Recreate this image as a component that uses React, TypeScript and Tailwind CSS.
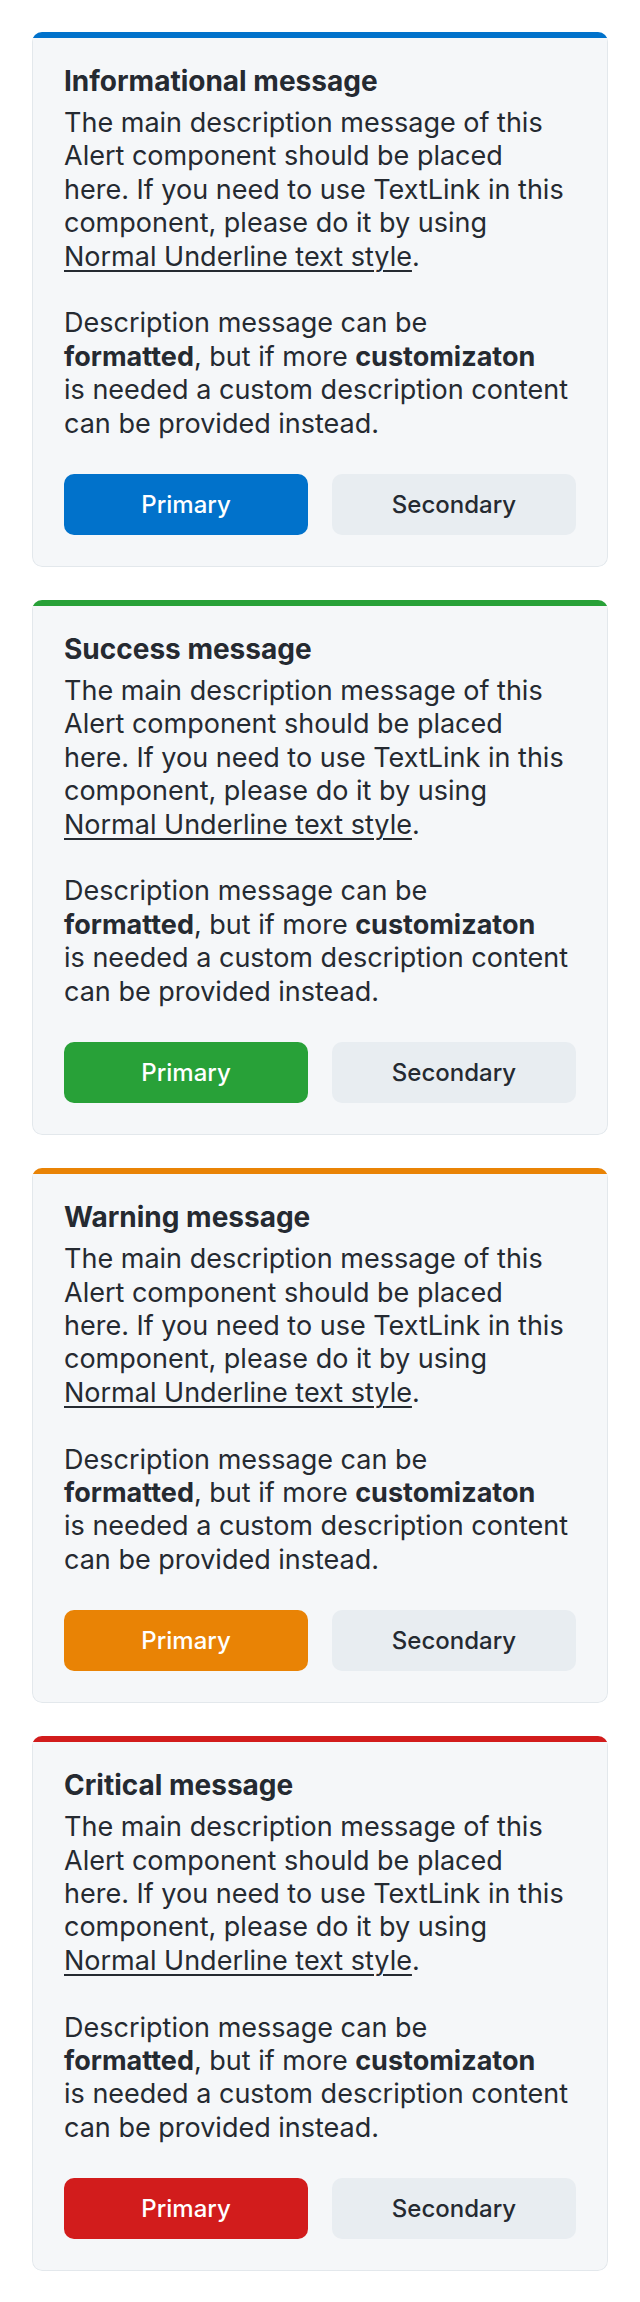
const alerts = [
  { title: "Informational message", stripe: "bg-[#0172cb]", button: "bg-[#0172cb]" },
  { title: "Success message", stripe: "bg-[#28a138]", button: "bg-[#28a138]" },
  { title: "Warning message", stripe: "bg-[#e98305]", button: "bg-[#e98305]" },
  { title: "Critical message", stripe: "bg-[#d21c1c]", button: "bg-[#d21c1c]" },
];

function Alert({ title, stripe, button }: { title: string; stripe: string; button: string }) {
  return (
    <section className="overflow-hidden rounded-[10px] bg-[#f5f7f9]">
      <div className={`h-[6px] ${stripe}`} />
      <div className="rounded-b-[10px] border-x border-b border-[#e3e8ec] px-[31px] pb-[31px] pt-[26px]">
        <h2 className="text-[28px] font-bold leading-[34px]">{title}</h2>
        <div className="mt-2 text-[27px] leading-[33.4px]">
          <p>
            <span className="block whitespace-nowrap">The main description message of this</span>
            <span className="block whitespace-nowrap">Alert component should be placed</span>
            <span className="block whitespace-nowrap">here. If you need to use TextLink in this</span>
            <span className="block whitespace-nowrap">component, please do it by using</span>
            <span className="block whitespace-nowrap">
              <a className="underline decoration-[1.5px] underline-offset-[4px]" href="#">Normal Underline text style</a>.
            </span>
          </p>
          <p className="mt-[33.4px]">
            <span className="block whitespace-nowrap">Description message can be</span>
            <span className="block whitespace-nowrap">
              <strong className="font-bold">formatted</strong>, but if more <strong className="font-bold">customizaton</strong>
            </span>
            <span className="block whitespace-nowrap">is needed a custom description content</span>
            <span className="block whitespace-nowrap">can be provided instead.</span>
          </p>
        </div>
        <div className="mt-[34px] grid grid-cols-2 gap-6">
          <button className={`h-[61px] rounded-[10px] text-[24px] font-medium text-white ${button}`} type="button">
            Primary
          </button>
          <button className="h-[61px] rounded-[10px] bg-[#e8edf1] text-[24px] font-medium text-[#252a31]" type="button">
            Secondary
          </button>
        </div>
      </div>
    </section>
  );
}

export default function App() {
  return (
    <main className="min-h-screen bg-white p-8 pb-[35px] font-['Inter',sans-serif] text-[#252a31]">
      <div className="flex flex-col gap-[33px]">
        {alerts.map((alert) => (
          <Alert key={alert.title} {...alert} />
        ))}
      </div>
    </main>
  );
}
